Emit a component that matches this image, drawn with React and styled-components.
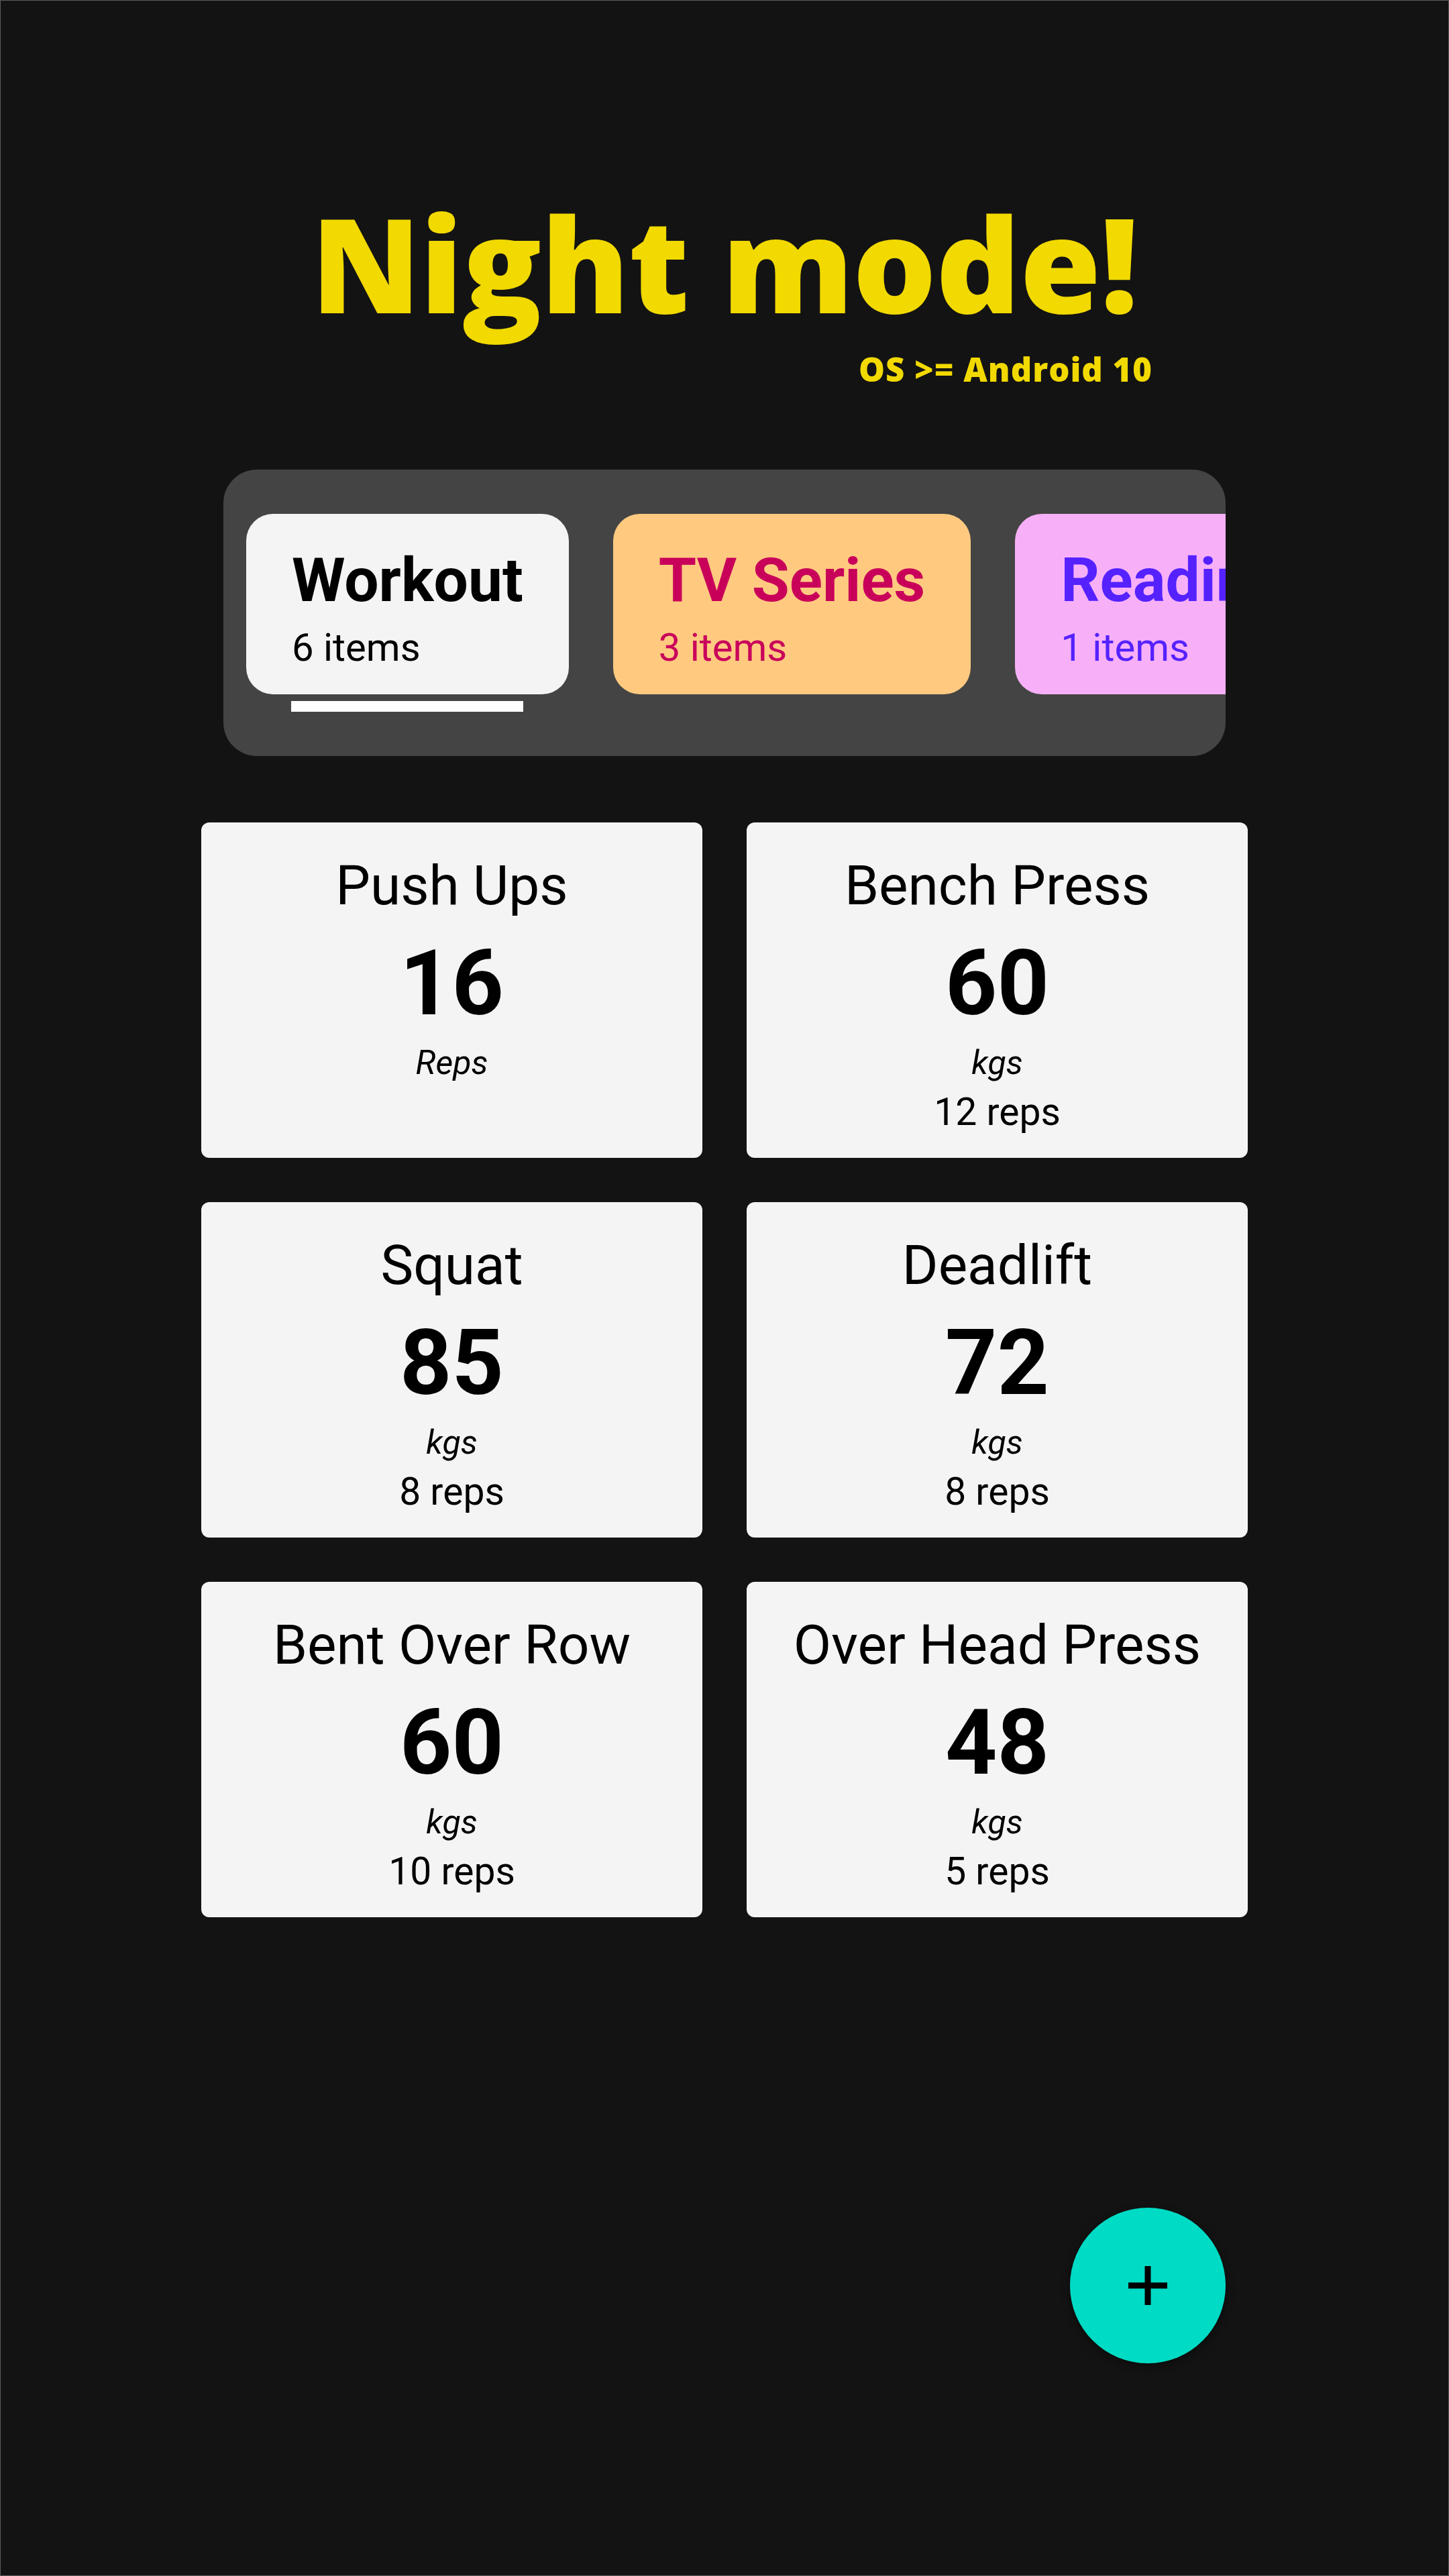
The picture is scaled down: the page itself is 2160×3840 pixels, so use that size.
import React from 'react'
import styled, { createGlobalStyle } from 'styled-components'

const GlobalStyle = createGlobalStyle`
    html, body {
        margin: 0;
        padding: 0;
        background-color: #131313;
    }
    * {
        box-sizing: border-box;
    }
`

const Screen = styled.div`
    min-height: 100vh;
    background-color: #131313;
    border: 1px solid #5c5c5c;
    padding-top: 292px;
    font-family: Roboto, 'Noto Sans', sans-serif;
    color: #000;
`

const Title = styled.h1`
    margin: 0;
    font-family: 'Open Sans', 'Noto Sans', sans-serif;
    font-weight: 800;
    font-size: 196px;
    line-height: 1;
    letter-spacing: -1px;
    color: #f2d900;
    text-align: center;
`

const Subtitle = styled.div`
    margin-top: 37px;
    padding-right: 441px;
    font-family: 'Open Sans', 'Noto Sans', sans-serif;
    font-weight: 800;
    font-size: 49px;
    line-height: 1;
    letter-spacing: 1px;
    color: #f2d900;
    text-align: right;
`

const TabBar = styled.div`
    width: 1494px;
    margin: 125px auto 0;
    padding: 66px 0 66px 34px;
    background-color: #444444;
    border-radius: 50px;
    display: flex;
    gap: 66px;
    overflow: hidden;
`

const TabItem = styled.div`
    display: flex;
    flex-direction: column;
    flex-shrink: 0;
`

const TabCard = styled.div`
    height: 269px;
    padding: 45px 68px 0;
    border-radius: 40px;
    background-color: ${p => p.bg};
    color: ${p => p.fg};
    white-space: nowrap;
`

const TabName = styled.div`
    font-size: 91px;
    font-weight: 700;
    line-height: 108px;
`

const TabCount = styled.div`
    margin-top: 11px;
    font-size: 58px;
    font-weight: 400;
    line-height: 70px;
`

const Indicator = styled.div`
    height: 16px;
    margin: 10px 68px 0 67px;
    background-color: ${p => (p.active ? '#ffffff' : 'transparent')};
`

const Grid = styled.div`
    width: 1560px;
    margin: 99px auto 0;
    display: grid;
    grid-template-columns: 747px 747px;
    grid-auto-rows: 500px;
    gap: 66px;
`

const Card = styled.div`
    background-color: #f4f4f4;
    border-radius: 12px;
    padding-top: 46px;
    display: flex;
    flex-direction: column;
    align-items: center;
    text-align: center;
`

const CardName = styled.div`
    font-size: 82px;
    font-weight: 400;
    line-height: 96px;
`

const CardValue = styled.div`
    margin-top: 19px;
    font-size: 135px;
    font-weight: 700;
    line-height: 158px;
`

const CardUnit = styled.div`
    margin-top: 10px;
    font-size: 50px;
    font-style: italic;
    line-height: 59px;
`

const CardReps = styled.div`
    margin-top: 10px;
    font-size: 57px;
    line-height: 67px;
`

const Fab = styled.button`
    position: fixed;
    right: 333px;
    bottom: 317px;
    width: 232px;
    height: 232px;
    border: none;
    border-radius: 50%;
    background-color: #00dbc5;
    box-shadow: 0 4px 14px rgba(0, 0, 0, 0.45);
    display: flex;
    align-items: center;
    justify-content: center;
    padding: 0;
    cursor: pointer;
`

const tabs = [
    { name: 'Workout', count: 6, bg: '#f4f4f4', fg: '#000000', active: true },
    { name: 'TV Series', count: 3, bg: '#ffca80', fg: '#c9005a' },
    { name: 'Reading', count: 1, bg: '#f7b0f8', fg: '#5522ff' },
]

const exercises = [
    { name: 'Push Ups', value: 16, unit: 'Reps' },
    { name: 'Bench Press', value: 60, unit: 'kgs', reps: 12 },
    { name: 'Squat', value: 85, unit: 'kgs', reps: 8 },
    { name: 'Deadlift', value: 72, unit: 'kgs', reps: 8 },
    { name: 'Bent Over Row', value: 60, unit: 'kgs', reps: 10 },
    { name: 'Over Head Press', value: 48, unit: 'kgs', reps: 5 },
]

const App = () => {
    return (
        <Screen>
            <GlobalStyle />
            <Title>Night mode!</Title>
            <Subtitle>OS &gt;= Android 10</Subtitle>

            <TabBar>
                {tabs.map(t => (
                    <TabItem key={t.name}>
                        <TabCard bg={t.bg} fg={t.fg}>
                            <TabName>{t.name}</TabName>
                            <TabCount>{t.count} items</TabCount>
                        </TabCard>
                        <Indicator active={t.active} />
                    </TabItem>
                ))}
            </TabBar>

            <Grid>
                {exercises.map(e => (
                    <Card key={e.name}>
                        <CardName>{e.name}</CardName>
                        <CardValue>{e.value}</CardValue>
                        <CardUnit>{e.unit}</CardUnit>
                        {e.reps && <CardReps>{e.reps} reps</CardReps>}
                    </Card>
                ))}
            </Grid>

            <Fab aria-label="add">
                <svg width="58" height="58" viewBox="0 0 58 58">
                    <rect x="24.5" y="0" width="9" height="58" fill="#000" />
                    <rect x="0" y="24.5" width="58" height="9" fill="#000" />
                </svg>
            </Fab>
        </Screen>
    )
}

export default App
